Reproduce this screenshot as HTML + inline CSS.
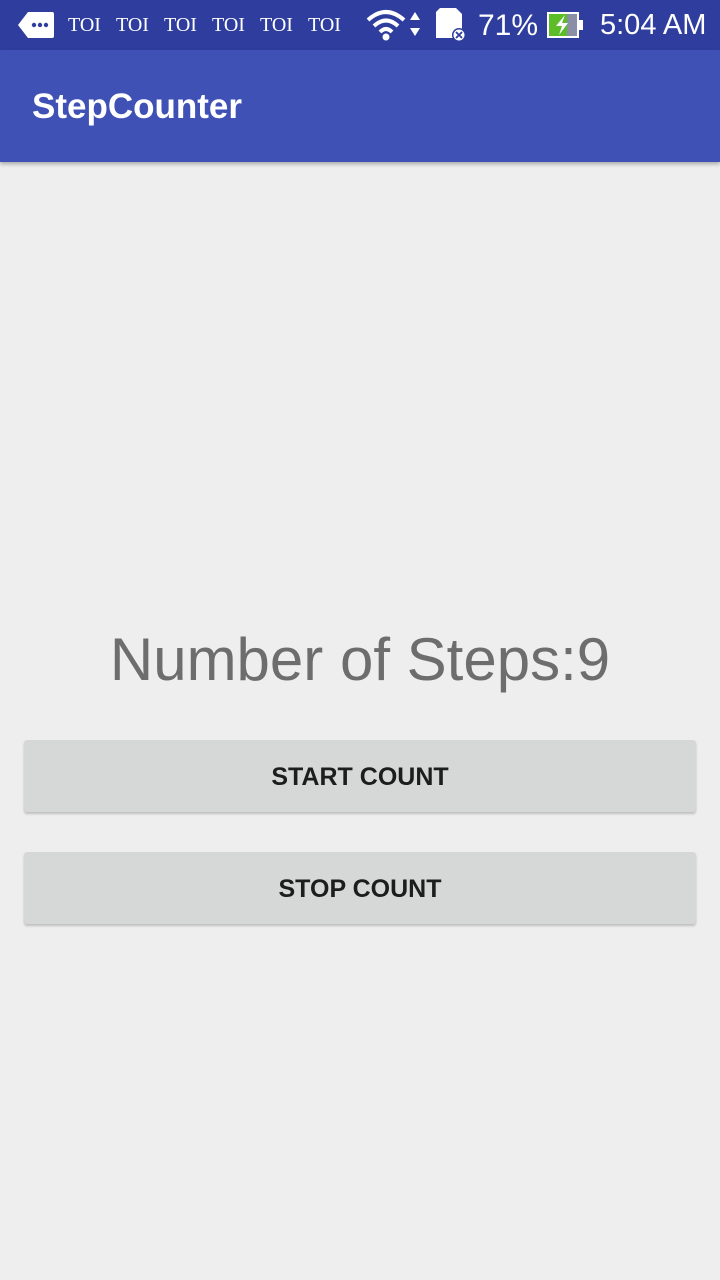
<!DOCTYPE html>
<html><head><meta charset="utf-8"><style>
*{margin:0;padding:0;box-sizing:border-box}
body{width:720px;height:1280px;background:#eeeeee;font-family:"Liberation Sans",sans-serif;position:relative;overflow:hidden}
.sb{position:absolute;top:0;left:0;width:720px;height:50px;background:#2f3e9e;color:#fff}
.ab{position:absolute;top:50px;left:0;width:720px;height:112px;background:#3f51b5;box-shadow:0 2px 4px rgba(0,0,0,.3)}
.ab span{position:absolute;left:32px;top:37px;font-size:35px;font-weight:bold;color:#fff}
.toi{position:absolute;top:14px;font-family:"Liberation Serif",serif;font-size:20px}
.steps{position:absolute;top:625px;width:720px;text-align:center;font-size:60px;color:#6d6d6d}
.btn{position:absolute;left:24px;width:672px;height:72px;background:#d6d7d7;border-radius:3px;box-shadow:0 2px 2px rgba(0,0,0,.2);text-align:center;line-height:74px;font-size:25px;font-weight:bold;color:#1d1d1d}
</style></head><body>
<div class="sb">
<svg style="position:absolute;left:18px;top:12px" width="36" height="26"><path d="M10 0H34Q36 0 36 2V24Q36 26 34 26H10L0 13Z" fill="#fff"/><circle cx="16" cy="13" r="2.2" fill="#2f3e9e"/><circle cx="22" cy="13" r="2.2" fill="#2f3e9e"/><circle cx="28" cy="13" r="2.2" fill="#2f3e9e"/></svg>
<span class="toi" style="left:68px">TOI</span><span class="toi" style="left:116px">TOI</span><span class="toi" style="left:164px">TOI</span><span class="toi" style="left:212px">TOI</span><span class="toi" style="left:260px">TOI</span><span class="toi" style="left:308px">TOI</span>
<svg style="position:absolute;left:366px;top:8px" width="56" height="34"><path d="M2 12Q20 -4 38 12" stroke="#fff" stroke-width="4" fill="none"/><path d="M8 18Q20 7 32 18" stroke="#fff" stroke-width="4" fill="none"/><path d="M14 24Q20 18 26 24" stroke="#fff" stroke-width="4" fill="none"/><circle cx="20" cy="29" r="3.5" fill="#fff"/><path d="M44 12L49 4L54 12Z M44 20L54 20L49 28Z" fill="#fff"/></svg>
<svg style="position:absolute;left:434px;top:8px" width="36" height="34"><path d="M6 0H22L28 6V30H2V4Z" fill="#fff"/><circle cx="25" cy="27" r="7" fill="#2f3e9e"/><circle cx="25" cy="27" r="5.5" fill="#fff"/><path d="M22 24L28 30M28 24L22 30" stroke="#2f3e9e" stroke-width="1.8"/></svg>
<span style="position:absolute;left:478px;top:9px;font-size:30px">71%</span>
<svg style="position:absolute;left:546px;top:11px" width="40" height="28"><rect x="1" y="1" width="32" height="26" fill="#fff"/><rect x="3" y="3" width="18" height="22" fill="#5cbd28"/><rect x="21" y="3" width="10" height="22" fill="#8a8fa6"/><rect x="33" y="9" width="4" height="10" fill="#fff"/><path d="M19 4L10 15H16L13 24L22 12H16Z" fill="#fff"/></svg>
<span style="position:absolute;left:600px;top:9px;font-size:29px">5:04 AM</span>
</div>
<div class="ab"><span>StepCounter</span></div>
<div class="steps">Number of Steps:9</div>
<div class="btn" style="top:740px">START COUNT</div>
<div class="btn" style="top:852px">STOP COUNT</div>
</body></html>
